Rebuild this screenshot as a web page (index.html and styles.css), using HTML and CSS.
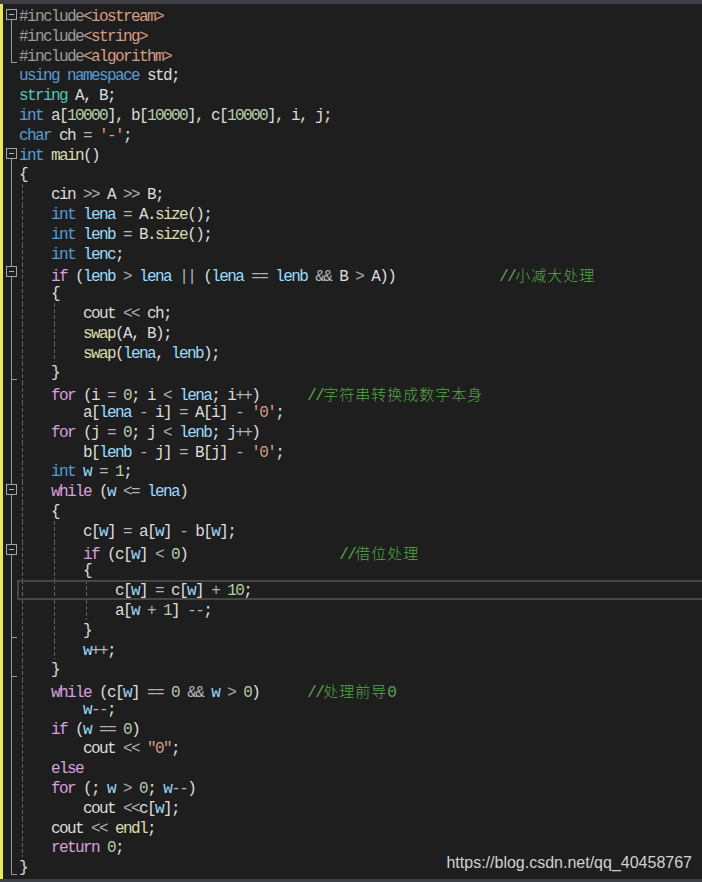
FILE: index.html
```html
<!DOCTYPE html>
<html lang="zh-CN">
<head>
  <meta charset="UTF-8">
  <meta name="viewport" content="width=device-width, initial-scale=1.0">
  <title>main.cpp</title>
  <link rel="stylesheet" href="styles.css">
</head>
<body>

  <!-- Tab strip edge -->
  <div class="topbar"></div>

  <!-- Editor -->
  <div class="editor">
    <div class="changes"></div>

    <div class="lines">
      <div class="row"><div class="fold st"></div><div class="code"><span class="p">#include</span><span class="s">&lt;iostream&gt;</span></div></div>
      <div class="row"><div class="fold ln"></div><div class="code"><span class="p">#include</span><span class="s">&lt;string&gt;</span></div></div>
      <div class="row"><div class="fold en"></div><div class="code"><span class="p">#include</span><span class="s">&lt;algorithm&gt;</span></div></div>
      <div class="row"><div class="fold"></div><div class="code"><span class="k">using</span> <span class="k">namespace</span> std;</div></div>
      <div class="row"><div class="fold"></div><div class="code"><span class="t">string</span> A, B;</div></div>
      <div class="row"><div class="fold"></div><div class="code"><span class="k">int</span> a[<span class="n">10000</span>], b[<span class="n">10000</span>], c[<span class="n">10000</span>], i, j;</div></div>
      <div class="row"><div class="fold"></div><div class="code"><span class="k">char</span> ch <span class="o">=</span> <span class="s">'-'</span>;</div></div>
      <div class="row"><div class="fold st"></div><div class="code"><span class="k">int</span> <span class="f">main</span>()</div></div>
      <div class="row"><div class="fold ln"></div><div class="code">{</div></div>
      <div class="row"><div class="fold ln"></div><div class="code g1">    cin <span class="o">&gt;&gt;</span> A <span class="o">&gt;&gt;</span> B;</div></div>
      <div class="row"><div class="fold ln"></div><div class="code g1">    <span class="k">int</span> <span class="v">lena</span> <span class="o">=</span> A.<span class="f">size</span>();</div></div>
      <div class="row"><div class="fold ln"></div><div class="code g1">    <span class="k">int</span> <span class="v">lenb</span> <span class="o">=</span> B.<span class="f">size</span>();</div></div>
      <div class="row"><div class="fold ln"></div><div class="code g1">    <span class="k">int</span> <span class="v">lenc</span>;</div></div>
      <div class="row"><div class="fold ln st"></div><div class="code g1">    <span class="c">if</span> (<span class="v">lenb</span> <span class="o">&gt;</span> <span class="v">lena</span> <span class="o">||</span> (<span class="v">lena</span> <span class="o">==</span> <span class="v">lenb</span> <span class="o">&amp;&amp;</span> B <span class="o">&gt;</span> A))             <span class="m">//<span class="cjk">小减大处理</span></span></div></div>
      <div class="row"><div class="fold ln"></div><div class="code g1">    {</div></div>
      <div class="row"><div class="fold ln"></div><div class="code g2">        cout <span class="o">&lt;&lt;</span> ch;</div></div>
      <div class="row"><div class="fold ln"></div><div class="code g2">        <span class="f">swap</span>(A, B);</div></div>
      <div class="row"><div class="fold ln"></div><div class="code g2">        <span class="f">swap</span>(<span class="v">lena</span>, <span class="v">lenb</span>);</div></div>
      <div class="row"><div class="fold ln en"></div><div class="code g1">    }</div></div>
      <div class="row"><div class="fold ln"></div><div class="code g1">    <span class="c">for</span> (i <span class="o">=</span> <span class="n">0</span>; i <span class="o">&lt;</span> <span class="v">lena</span>; i<span class="o">++</span>)      <span class="m">//<span class="cjk">字符串转换成数字本身</span></span></div></div>
      <div class="row"><div class="fold ln"></div><div class="code g1">        a[<span class="v">lena</span> <span class="o">-</span> i] <span class="o">=</span> A[i] <span class="o">-</span> <span class="s">'0'</span>;</div></div>
      <div class="row"><div class="fold ln"></div><div class="code g1">    <span class="c">for</span> (j <span class="o">=</span> <span class="n">0</span>; j <span class="o">&lt;</span> <span class="v">lenb</span>; j<span class="o">++</span>)</div></div>
      <div class="row"><div class="fold ln"></div><div class="code g1">        b[<span class="v">lenb</span> <span class="o">-</span> j] <span class="o">=</span> B[j] <span class="o">-</span> <span class="s">'0'</span>;</div></div>
      <div class="row"><div class="fold ln"></div><div class="code g1">    <span class="k">int</span> <span class="v">w</span> <span class="o">=</span> <span class="n">1</span>;</div></div>
      <div class="row"><div class="fold ln st"></div><div class="code g1">    <span class="c">while</span> (<span class="v">w</span> <span class="o">&lt;=</span> <span class="v">lena</span>)</div></div>
      <div class="row"><div class="fold ln"></div><div class="code g1">    {</div></div>
      <div class="row"><div class="fold ln"></div><div class="code g2">        c[<span class="v">w</span>] <span class="o">=</span> a[<span class="v">w</span>] <span class="o">-</span> b[<span class="v">w</span>];</div></div>
      <div class="row"><div class="fold ln st"></div><div class="code g2">        <span class="c">if</span> (c[<span class="v">w</span>] <span class="o">&lt;</span> <span class="n">0</span>)                   <span class="m">//<span class="cjk">借位处理</span></span></div></div>
      <div class="row"><div class="fold ln"></div><div class="code g2">        {</div></div>
      <div class="row"><div class="fold ln"></div><div class="code g3 cur">            c[<span class="v">w</span>] <span class="o">=</span> c[<span class="v">w</span>] <span class="o">+</span> <span class="n">10</span>;</div></div>
      <div class="row"><div class="fold ln"></div><div class="code g3">            a[<span class="v">w</span> <span class="o">+</span> <span class="n">1</span>] <span class="o">--</span>;</div></div>
      <div class="row"><div class="fold ln en"></div><div class="code g2">        }</div></div>
      <div class="row"><div class="fold ln"></div><div class="code g2">        <span class="v">w</span><span class="o">++</span>;</div></div>
      <div class="row"><div class="fold ln en"></div><div class="code g1">    }</div></div>
      <div class="row"><div class="fold ln"></div><div class="code g1">    <span class="c">while</span> (c[<span class="v">w</span>] <span class="o">==</span> <span class="n">0</span> <span class="o">&amp;&amp;</span> <span class="v">w</span> <span class="o">&gt;</span> <span class="n">0</span>)      <span class="m">//<span class="cjk">处理前导</span>0</span></div></div>
      <div class="row"><div class="fold ln"></div><div class="code g1">        <span class="v">w</span><span class="o">--</span>;</div></div>
      <div class="row"><div class="fold ln"></div><div class="code g1">    <span class="c">if</span> (<span class="v">w</span> <span class="o">==</span> <span class="n">0</span>)</div></div>
      <div class="row"><div class="fold ln"></div><div class="code g1">        cout <span class="o">&lt;&lt;</span> <span class="s">"0"</span>;</div></div>
      <div class="row"><div class="fold ln"></div><div class="code g1">    <span class="c">else</span></div></div>
      <div class="row"><div class="fold ln"></div><div class="code g1">    <span class="c">for</span> (; <span class="v">w</span> <span class="o">&gt;</span> <span class="n">0</span>; <span class="v">w</span><span class="o">--</span>)</div></div>
      <div class="row"><div class="fold ln"></div><div class="code g1">        cout <span class="o">&lt;&lt;</span>c[<span class="v">w</span>];</div></div>
      <div class="row"><div class="fold ln"></div><div class="code g1">    cout <span class="o">&lt;&lt;</span> <span class="f">endl</span>;</div></div>
      <div class="row"><div class="fold ln"></div><div class="code g1">    <span class="c">return</span> <span class="n">0</span>;</div></div>
      <div class="row"><div class="fold en"></div><div class="code">}</div></div>
    </div>

    <!-- Watermark -->
    <div class="watermark">https://blog.csdn.net/qq_40458767</div>
  </div>

  <div class="bottombar"></div>

</body>
</html>
```

FILE: styles.css
```css
/*--------------------------------------------------------------
# Global Styles
--------------------------------------------------------------*/
* {
  margin: 0;
  padding: 0;
  box-sizing: border-box;
}

html,
body {
  height: 100%;
}

body {
  display: flex;
  flex-direction: column;
  background: #1e1e1e;
  color: #dcdcdc;
  font-family: "Liberation Mono", monospace;
  overflow: hidden;
}

/*--------------------------------------------------------------
# Frame Bars
--------------------------------------------------------------*/
.topbar {
  height: 4px;
  background: #3f3f46;
}

.bottombar {
  height: 3px;
  background: #3f3f46;
}

/*--------------------------------------------------------------
# Editor
--------------------------------------------------------------*/
.editor {
  flex: 1;
  display: flex;
  position: relative;
  overflow: hidden;
}

/* Unsaved changes margin */
.changes {
  width: 3px;
  background: #e8e85c;
}

.lines {
  flex: 1;
  padding-top: 2px;
}

.row {
  display: flex;
  height: 19.8px;
}

/*--------------------------------------------------------------
# Outlining Margin
--------------------------------------------------------------*/
.fold {
  position: relative;
  width: 14px;
  flex-shrink: 0;
}

.fold::before,
.fold::after {
  position: absolute;
  left: 8px;
}

.fold.st::before {
  content: "";
  top: 13px;
  bottom: 0;
  width: 1px;
  background: #999;
}

.fold.en::before {
  content: "";
  top: 0;
  bottom: 2px;
  width: 1px;
  background: #999;
}

.fold.ln::before {
  content: "";
  top: 0;
  bottom: 0;
  width: 1px;
  background: #999;
}

/* Collapse box */
.fold.st::after {
  content: "";
  left: 3px;
  top: 3px;
  width: 9px;
  height: 9px;
  border: 1px solid #a5a5a5;
  background: linear-gradient(#b4b4b4, #b4b4b4) center / 5px 1px no-repeat, #1e1e1e;
}

/* End tick */
.fold.en::after {
  content: "";
  bottom: 2px;
  width: 6px;
  height: 1px;
  background: #999;
}

/*--------------------------------------------------------------
# Code Lines
--------------------------------------------------------------*/
.code {
  --dash: repeating-linear-gradient(#646464 0 4px, transparent 4px 6px);
  flex: 1;
  height: 19.8px;
  line-height: 19.8px;
  padding-top: 2px;
  padding-left: 2px;
  font-size: 16px;
  letter-spacing: -1.6px;
  white-space: pre;
}

/* Indent guides */
.g1 {
  background: var(--dash) 5px 0 / 1px 100% no-repeat;
}

.g2 {
  background:
    var(--dash) 5px 0 / 1px 100% no-repeat,
    var(--dash) 37px 0 / 1px 100% no-repeat;
}

.g3 {
  background:
    var(--dash) 5px 0 / 1px 100% no-repeat,
    var(--dash) 37px 0 / 1px 100% no-repeat,
    var(--dash) 69px 0 / 1px 100% no-repeat;
}

/* Current line */
.cur {
  margin-right: -4px;
  box-shadow: inset 0 0 0 2px #464646;
}

/* Syntax colours */
.p { color: #9b9b9b; }
.s { color: #d69d85; }
.k { color: #569cd6; }
.c { color: #d8a0df; }
.t { color: #4ec9b0; }
.f { color: #dcdcaa; }
.v { color: #9cdcfe; }
.n { color: #b5cea8; }
.o { color: #b4b4b4; }
.m { color: #57a64a; }

.cjk {
  font-family: "Noto Sans CJK SC", sans-serif;
  font-size: 15px;
  font-weight: 300;
  letter-spacing: 1px;
}

/*--------------------------------------------------------------
# Watermark
--------------------------------------------------------------*/
.watermark {
  position: absolute;
  right: 10px;
  bottom: 7px;
  font-family: "Liberation Sans", Arial, sans-serif;
  font-size: 16px;
  color: #d2d2d2;
}
```
